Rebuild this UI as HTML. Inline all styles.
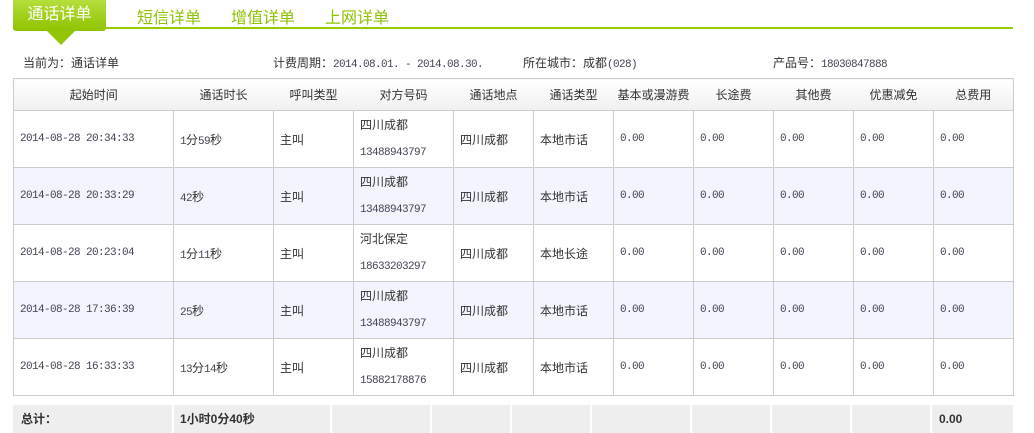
<!DOCTYPE html>
<html><head><meta charset="utf-8"><style>
body{margin:0;width:1034px;height:433px;overflow:hidden;background:#fff;font-family:"Liberation Sans","Noto Sans CJK SC",sans-serif;font-size:12px;color:#333;position:relative}
.line{position:absolute;left:13px;top:27px;width:1000px;height:2px;background:#9c0}
.tab{position:absolute;left:13px;top:0;width:93px;height:31px;background:linear-gradient(#b5de3c,#8fc300);border-radius:0 0 3px 3px;color:#fff;font-size:16px;text-align:center;line-height:30px}
.arr{position:absolute;left:47px;top:31px;width:0;height:0;border-left:14px solid transparent;border-right:14px solid transparent;border-top:14px solid #94c608}
.t2{position:absolute;top:4px;color:#8cc400;font-size:16px}
.info{position:absolute;top:54px;font-size:12px;color:#333}
.n{font-family:"Liberation Mono",monospace;font-size:11px;letter-spacing:-0.6px;color:#445}
table{position:absolute;left:13px;top:78px;border-collapse:collapse;table-layout:fixed;width:1000px}
th{height:31px;font-weight:normal;font-size:12px;background:linear-gradient(#fff,#f0f0f0);border-top:1px solid #ccc;border-bottom:1px solid #ccc;color:#333;padding:0}
th:first-child{border-left:1px solid #ccc}th:last-child{border-right:1px solid #ccc}
td{border:1px solid #ccc;height:56px;padding:0 0 0 6px;font-size:12px;color:#333}
tr.a td{background:#f2f5fd}
.tot{position:absolute;top:405px;height:28px;background:#eee;font-weight:bold;line-height:28px;font-size:12px}
</style></head><body>
<div class="line"></div>
<div class="tab">通话详单</div><div class="arr"></div>
<div class="t2" style="left:137px">短信详单</div>
<div class="t2" style="left:231px">增值详单</div>
<div class="t2" style="left:325px">上网详单</div>
<div class="info" style="left:23px">当前为：通话详单</div>
<div class="info" style="left:273px">计费周期：<span class="n">2014.08.01. - 2014.08.30.</span></div>
<div class="info" style="left:523px">所在城市：成都<span class="n">(028)</span></div>
<div class="info" style="left:773px">产品号：<span class="n">18030847888</span></div>
<table>
<colgroup><col style="width:160px"><col style="width:100px"><col style="width:80px"><col style="width:100px"><col style="width:80px"><col style="width:80px"><col style="width:80px"><col style="width:80px"><col style="width:80px"><col style="width:80px"><col style="width:80px"></colgroup>
<tr><th>起始时间</th><th>通话时长</th><th>呼叫类型</th><th>对方号码</th><th>通话地点</th><th>通话类型</th><th>基本或漫游费</th><th>长途费</th><th>其他费</th><th>优惠减免</th><th>总费用</th></tr>
<tr><td class="n">2014-08-28 20:34:33</td><td><span class="n">1</span>分<span class="n">59</span>秒</td><td>主叫</td><td style="line-height:26px">四川成都<br><span class="n">13488943797</span></td><td>四川成都</td><td>本地市话</td><td class="n">0.00</td><td class="n">0.00</td><td class="n">0.00</td><td class="n">0.00</td><td class="n">0.00</td></tr>
<tr class="a"><td class="n">2014-08-28 20:33:29</td><td><span class="n">42</span>秒</td><td>主叫</td><td style="line-height:26px">四川成都<br><span class="n">13488943797</span></td><td>四川成都</td><td>本地市话</td><td class="n">0.00</td><td class="n">0.00</td><td class="n">0.00</td><td class="n">0.00</td><td class="n">0.00</td></tr>
<tr><td class="n">2014-08-28 20:23:04</td><td><span class="n">1</span>分<span class="n">11</span>秒</td><td>主叫</td><td style="line-height:26px">河北保定<br><span class="n">18633203297</span></td><td>四川成都</td><td>本地长途</td><td class="n">0.00</td><td class="n">0.00</td><td class="n">0.00</td><td class="n">0.00</td><td class="n">0.00</td></tr>
<tr class="a"><td class="n">2014-08-28 17:36:39</td><td><span class="n">25</span>秒</td><td>主叫</td><td style="line-height:26px">四川成都<br><span class="n">13488943797</span></td><td>四川成都</td><td>本地市话</td><td class="n">0.00</td><td class="n">0.00</td><td class="n">0.00</td><td class="n">0.00</td><td class="n">0.00</td></tr>
<tr><td class="n">2014-08-28 16:33:33</td><td><span class="n">13</span>分<span class="n">14</span>秒</td><td>主叫</td><td style="line-height:26px">四川成都<br><span class="n">15882178876</span></td><td>四川成都</td><td>本地市话</td><td class="n">0.00</td><td class="n">0.00</td><td class="n">0.00</td><td class="n">0.00</td><td class="n">0.00</td></tr>
</table>
<div class="tot" style="left:13px;width:159px;padding-left:8px;box-sizing:border-box">总计：</div>
<div class="tot" style="left:174px;width:156px;padding-left:6px;box-sizing:border-box">1小时0分40秒</div>
<div class="tot" style="left:332px;width:98px"></div>
<div class="tot" style="left:432px;width:78px"></div>
<div class="tot" style="left:512px;width:78px"></div>
<div class="tot" style="left:592px;width:98px"></div>
<div class="tot" style="left:692px;width:78px"></div>
<div class="tot" style="left:772px;width:78px"></div>
<div class="tot" style="left:852px;width:78px"></div>
<div class="tot" style="left:932px;width:81px;padding-left:7px;box-sizing:border-box;color:#333">0.00</div>
</body></html>
